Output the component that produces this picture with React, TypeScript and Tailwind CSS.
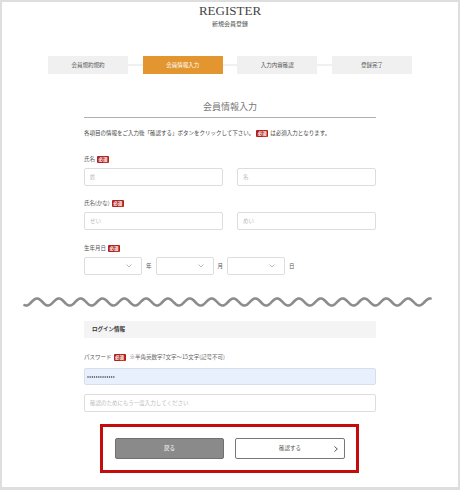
import React from "react";

function Badge() {
  return (
    <span className="inline-flex items-center justify-center w-[12px] h-[7px] bg-[#b1201b] text-white text-[4.5px] leading-none font-bold rounded-[1px] mx-[2px]">
      必須
    </span>
  );
}

function Chevron() {
  return (
    <svg width="6" height="4" viewBox="0 0 6 4" className="shrink-0">
      <polyline points="0.5,0.5 3,3 5.5,0.5" fill="none" stroke="#aaaaaa" strokeWidth="0.8" />
    </svg>
  );
}

function Select() {
  return (
    <div className="w-[58px] h-[18px] border border-[#dddddd] rounded-[2px] bg-white flex items-center justify-end pr-[9px]">
      <Chevron />
    </div>
  );
}

function Wave() {
  const W = 409;
  const P = 21.83;
  const pts: string[] = [];
  for (let x = 1.5; x <= W - 1.5; x += 0.5) {
    const y = 8 - 3.5 * Math.cos((2 * Math.PI * (x + 23 - 37)) / P);
    pts.push(`${x.toFixed(2)},${y.toFixed(2)}`);
  }
  return (
    <svg width={W} height="16" viewBox={`0 0 ${W} 16`} className="block ml-[21px] mt-[19px]">
      <polyline points={pts.join(" ")} fill="none" stroke="#8c8c8c" strokeWidth="2.6" strokeLinecap="round" />
    </svg>
  );
}

function Dots() {
  const n = 13;
  return (
    <svg width="30" height="4" viewBox="0 0 30 4" aria-label="•••••••••••••">
      {Array.from({ length: n }).map((_, i) => (
        <circle key={i} cx={1 + i * 2.15} cy={2} r={0.75} fill="#333333" />
      ))}
    </svg>
  );
}

const steps = ["会員規約規約", "会員情報入力", "入力内容確認", "登録完了"];

export default function App() {
  return (
    <div className="w-[460px] h-[490px] bg-[#dedede] pt-[2px] px-[2px] pb-[3px] font-['Noto_Sans_CJK_JP','Noto_Sans',sans-serif]">
      <div className="h-full bg-white flex flex-col pt-[2px]">
        {/* header */}
        <div className="flex flex-col items-center">
          <div className="font-['Liberation_Serif',serif] text-[13px] leading-[14px] h-[14px] text-[#444444]">REGISTER</div>
          <div className="text-[6px] leading-[8px] h-[8px] mt-[2px] text-[#555555]">新規会員登録</div>
        </div>

        {/* steps */}
        <div className="w-[364px] mx-auto mt-[28px] h-[18px] flex items-center">
          {steps.map((s, i) => (
            <React.Fragment key={s}>
              {i > 0 && <div className="flex-1 h-[2px] bg-[#f0f0f0]" />}
              <div
                className={
                  i === 1
                    ? "w-[80px] h-[18px] flex items-center justify-center bg-[#e3962f] text-white text-[5.5px]"
                    : "w-[80px] h-[18px] flex items-center justify-center bg-[#f0f0f0] text-[#555555] text-[5.5px]"
                }
              >
                {s}
              </div>
            </React.Fragment>
          ))}
        </div>

        {/* form top */}
        <div className="w-[292px] mx-auto flex flex-col">
          <div className="mt-[27px] h-[12px] text-[9px] leading-[12px] text-center text-[#777777]">会員情報入力</div>
          <div className="mt-[4px] h-px bg-[#b0b0b0]" />
          <div className="mt-[11px] h-[8px] text-[5.5px] leading-[8px] text-[#444444] flex items-center whitespace-nowrap">
            各項目の情報をご入力後「確認する」ボタンをクリックして下さい。
            <Badge />
            は必須入力となります。
          </div>

          <div className="mt-[18px] h-[8px] text-[5.5px] leading-[8px] text-[#555555] flex items-center">
            氏名<Badge />
          </div>
          <div className="mt-[5px] grid grid-cols-2 gap-[14px]">
            <div className="h-[18px] border border-[#dddddd] rounded-[2px] flex items-center pl-[5px] text-[5.5px] text-[#bbbbbb]">姓</div>
            <div className="h-[18px] border border-[#dddddd] rounded-[2px] flex items-center pl-[5px] text-[5.5px] text-[#bbbbbb]">名</div>
          </div>

          <div className="mt-[13px] h-[8px] text-[5.5px] leading-[8px] text-[#555555] flex items-center">
            氏名(かな)<Badge />
          </div>
          <div className="mt-[5px] grid grid-cols-2 gap-[14px]">
            <div className="h-[18px] border border-[#dddddd] rounded-[2px] flex items-center pl-[5px] text-[5.5px] text-[#bbbbbb]">せい</div>
            <div className="h-[18px] border border-[#dddddd] rounded-[2px] flex items-center pl-[5px] text-[5.5px] text-[#bbbbbb]">めい</div>
          </div>

          <div className="mt-[14px] h-[8px] text-[5.5px] leading-[8px] text-[#555555] flex items-center">
            生年月日<Badge />
          </div>
          <div className="mt-[5px] flex items-center gap-[4px] text-[5.5px] text-[#555555]">
            <Select />
            <span>年</span>
            <Select />
            <span>月</span>
            <Select />
            <span>日</span>
          </div>
        </div>

        <Wave />

        {/* login */}
        <div className="w-[292px] mx-auto flex flex-col">
          <div className="mt-[11px] h-[17px] bg-[#f4f4f4] flex items-center pl-[8px] text-[5.5px] font-bold text-[#333333]">ログイン情報</div>
          <div className="mt-[15px] h-[8px] text-[5.5px] leading-[8px] text-[#555555] flex items-center whitespace-nowrap">
            パスワード<Badge />
            <span className="ml-[2px] text-[#666666]">※半角英数字7文字～15文字(記号不可)</span>
          </div>
          <div className="mt-[7px] h-[17px] bg-[#e8f0fe] border border-[#d9dfea] rounded-[2px] flex items-center pl-[2px]">
            <Dots />
          </div>
          <div className="mt-[9px] h-[18px] border border-[#dddddd] rounded-[2px] flex items-center pl-[5px] text-[5.5px] text-[#bbbbbb]">
            確認のためにもう一度入力してください
          </div>
        </div>

        {/* buttons */}
        <div className="mt-[12px] ml-[98px] w-[259px] h-[49px] border-[3px] border-[#c40c0c] flex items-center pl-[12px] gap-[11px]">
          <div className="w-[109px] h-[21px] bg-[#8a8a8a] border border-[#707070] rounded-[2px] flex items-center justify-center text-white text-[5.5px]">戻る</div>
          <div className="w-[110px] h-[21px] bg-white border border-[#777777] rounded-[2px] flex items-center justify-center text-[#555555] text-[5.5px] relative">
            確認する
            <svg width="4" height="6" viewBox="0 0 4 6" className="absolute right-[6px] top-[7px]">
              <polyline points="0.5,0.5 3.3,3 0.5,5.5" fill="none" stroke="#444444" strokeWidth="0.9" />
            </svg>
          </div>
        </div>
      </div>
    </div>
  );
}
